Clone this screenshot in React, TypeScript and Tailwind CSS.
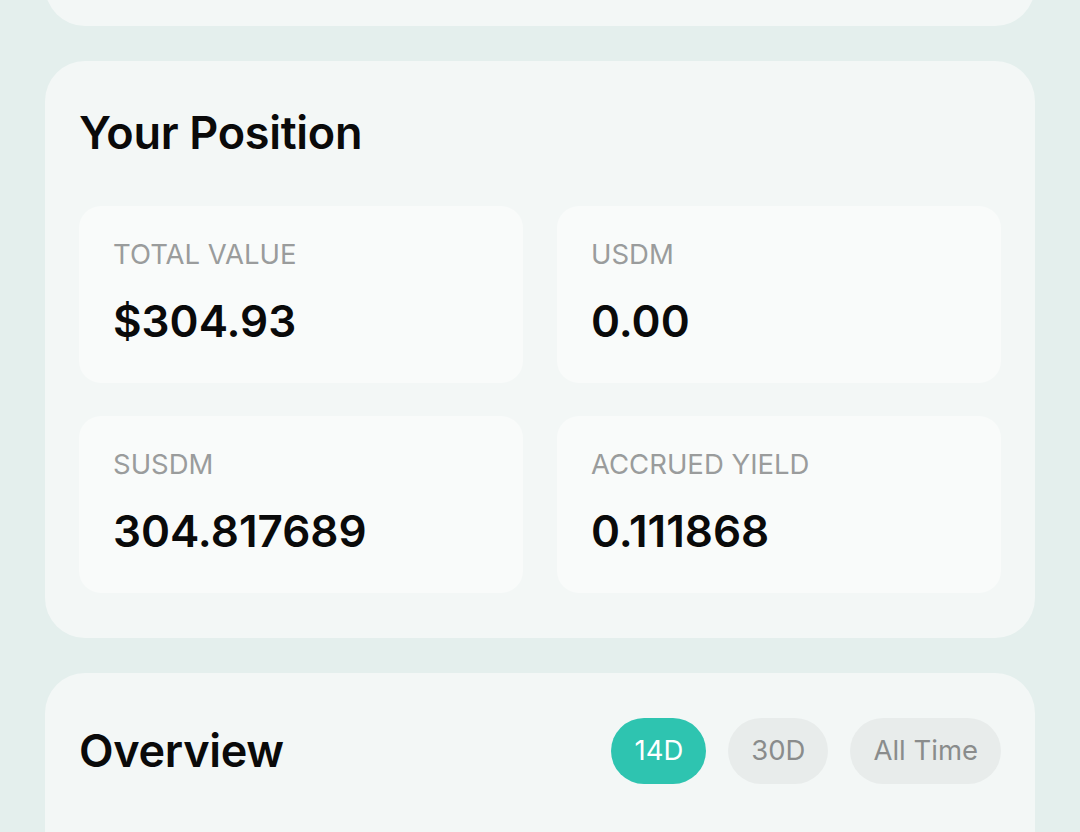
import React, { useState } from 'react';

const stats = [
  { label: 'TOTAL VALUE', value: '$304.93' },
  { label: 'USDM', value: '0.00' },
  { label: 'SUSDM', value: '304.817689' },
  { label: 'ACCRUED YIELD', value: '0.111868' },
];

const ranges = ['14D', '30D', 'All Time'];

function StatCard({ label, value }: { label: string; value: string }) {
  return (
    <div className="bg-[#f9fbfa] rounded-[22px] h-[177px] px-[34px] pt-[28px]">
      <div className="text-[27.5px] leading-[40px] text-[#9a9c9c]">{label}</div>
      <div className="mt-[22px] text-[44px] leading-[50px] font-semibold text-[#0a0a0a]">{value}</div>
    </div>
  );
}

export default function App() {
  const [range, setRange] = useState('14D');

  return (
    <div
      className="min-h-screen bg-[#e4efed] px-[45px] flex flex-col gap-[35px] overflow-hidden"
      style={{ fontFamily: 'Inter, "Noto Sans", sans-serif' }}
    >
      {/* previous section, scrolled mostly out of view */}
      <div className="-mt-[100px] h-[126px] bg-[#f3f7f6] rounded-[40px]" />

      {/* Your Position */}
      <div className="bg-[#f3f7f6] rounded-[40px] px-[34px] pt-[40px] pb-[45px]">
        <h2 className="text-[45px] leading-[64px] font-semibold text-[#0a0a0a] tracking-[-0.3px]">Your Position</h2>
        <div className="mt-[41px] grid grid-cols-2 gap-x-[34px] gap-y-[33px]">
          {stats.map((s) => (
            <StatCard key={s.label} label={s.label} value={s.value} />
          ))}
        </div>
      </div>

      {/* Overview */}
      <div className="bg-[#f3f7f6] rounded-t-[40px] px-[34px] pt-[45px] h-[200px]">
        <div className="flex items-center justify-between">
          <h2 className="text-[45px] leading-[64px] font-semibold text-[#0a0a0a] tracking-[-0.3px]">Overview</h2>
          <div className="flex gap-[22px]">
            {ranges.map((r) => (
              <button
                key={r}
                onClick={() => setRange(r)}
                className={
                  r === range
                    ? 'h-[66px] px-[23px] rounded-full bg-[#2ec4b0] text-white text-[27.5px]'
                    : 'h-[66px] px-[23px] rounded-full bg-[#e8eceb] text-[#8a8c8c] text-[27.5px]'
                }
              >
                {r}
              </button>
            ))}
          </div>
        </div>
      </div>
    </div>
  );
}
